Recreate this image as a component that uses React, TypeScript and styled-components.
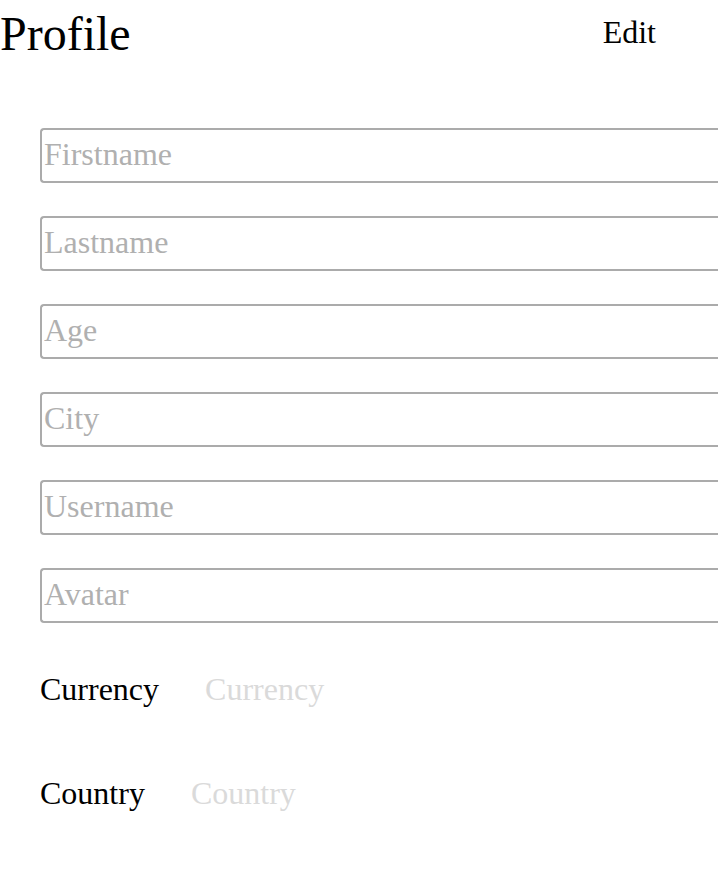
import React from "react";
import styled, { createGlobalStyle } from "styled-components";

const GlobalStyle = createGlobalStyle`
  html, body {
    margin: 0;
    padding: 0;
    background: #ffffff;
    overflow-x: hidden;
  }
  body {
    font-family: "Liberation Serif", "Times New Roman", serif;
    color: #000000;
  }
`;

const Page = styled.div`
  display: flex;
  flex-direction: column;
  width: 718px;
  min-height: 872px;
`;

const Header = styled.header`
  display: flex;
  justify-content: space-between;
  align-items: flex-start;
  padding: 6px 62px 0 0;
`;

const Title = styled.h1`
  margin: 0;
  font-size: 48px;
  line-height: 55px;
  font-weight: normal;
`;

const EditButton = styled.button`
  margin: 8px 0 0 0;
  padding: 0;
  border: none;
  background: none;
  font-family: "Liberation Serif", "Times New Roman", serif;
  font-size: 32px;
  line-height: 37px;
  color: #000000;
  cursor: pointer;
`;

const Form = styled.form`
  display: flex;
  flex-direction: column;
  gap: 33px;
  margin-top: 67px;
  padding-left: 40px;
`;

const Field = styled.input`
  box-sizing: border-box;
  width: 700px;
  height: 55px;
  margin: 0;
  padding: 0 2px 3px 2px;
  border: 2px solid #ababab;
  border-right: none;
  border-radius: 4px 0 0 4px;
  font-family: "Liberation Serif", "Times New Roman", serif;
  font-size: 32px;
  color: #000000;
  background: #ffffff;
  outline: none;

  &::placeholder {
    color: #b0b0b0;
    opacity: 1;
  }
`;

const Pickers = styled.div`
  display: flex;
  flex-direction: column;
  gap: 67px;
  margin-top: 15px;
`;

const PickerRow = styled.div`
  display: flex;
  align-items: center;
  gap: 46px;
  font-size: 32px;
  line-height: 37px;
`;

const PickerLabel = styled.span`
  color: #000000;
`;

const PickerValue = styled.span`
  color: #dadada;
`;

const fields = ["Firstname", "Lastname", "Age", "City", "Username", "Avatar"];
const pickers = ["Currency", "Country"];

export default function App() {
  return (
    <>
      <GlobalStyle />
      <Page>
        <Header>
          <Title>Profile</Title>
          <EditButton type="button">Edit</EditButton>
        </Header>
        <Form onSubmit={(e) => e.preventDefault()}>
          {fields.map((f) => (
            <Field key={f} placeholder={f} />
          ))}
          <Pickers>
            {pickers.map((p) => (
              <PickerRow key={p}>
                <PickerLabel>{p}</PickerLabel>
                <PickerValue>{p}</PickerValue>
              </PickerRow>
            ))}
          </Pickers>
        </Form>
      </Page>
    </>
  );
}
